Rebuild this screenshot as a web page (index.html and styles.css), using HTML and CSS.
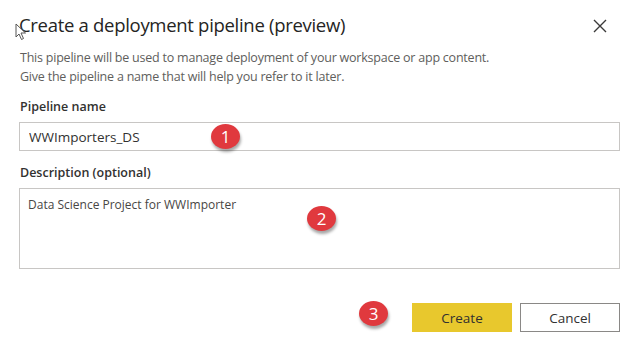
FILE: index.html
```html
<!DOCTYPE html>
<html lang="en">
<head>
    <meta charset="UTF-8">
    <title>Create a deployment pipeline</title>
    <link rel="stylesheet" href="styles.css">
</head>
<body>
    <div class="dialog">
        <div class="header">
            <h1>Create a deployment pipeline (preview)</h1>
            <button class="close" aria-label="Close">
                <svg width="14" height="14" viewBox="0 0 14 14"><path d="M1 1L13 13M13 1L1 13" stroke="#3b3a39" stroke-width="1.4" fill="none"/></svg>
            </button>
        </div>
        <p class="intro">This pipeline will be used to manage deployment of your workspace or app content.<br>Give the pipeline a name that will help you refer to it later.</p>

        <div class="field">
            <label for="name">Pipeline name</label>
            <div class="box">
                <input id="name" type="text" value="WWImporters_DS">
                <span class="badge b1">1</span>
            </div>
        </div>

        <div class="field">
            <label for="desc">Description (optional)</label>
            <div class="box">
                <textarea id="desc">Data Science Project for WWImporter</textarea>
                <span class="badge b2">2</span>
            </div>
        </div>

        <div class="actions">
            <span class="badge b3">3</span>
            <button class="btn primary">Create</button>
            <button class="btn">Cancel</button>
        </div>

        <!-- mouse pointer captured in the screenshot -->
        <svg class="cursor" width="12" height="18" viewBox="0 0 12 18"><path d="M1 1L1 14L4 11L6.5 16.5L8.5 15.5L6 10L10.5 10Z" fill="#fff" stroke="#555" stroke-width="1"/></svg>
    </div>
</body>
</html>
```

FILE: styles.css
```css
body {
    margin: 0;
    background: #ffffff;
    font-family: "Open Sans", "Noto Sans", Arial, sans-serif;
    color: #252423;
}

.dialog {
    position: relative;
    width: 629px;
    height: 346px;
    padding: 12px 10px 0 19px;
    box-sizing: border-box;
}

.header {
    display: flex;
    justify-content: space-between;
    align-items: center;
}

h1 {
    margin: 0;
    font-size: 18.5px;
    font-weight: 400;
    line-height: 26px;
    letter-spacing: -0.3px;
}

.close {
    background: none;
    border: none;
    padding: 0;
    margin: 2px 12px 0 0;
    width: 14px;
    height: 14px;
}

.intro {
    margin: 10px 0 0 1px;
    font-size: 12.5px;
    line-height: 19px;
    color: #605e5c;
    letter-spacing: -0.22px;
}

.field {
    margin-top: 12px;
    width: 601px;
}

.field + .field {
    margin-top: 13px;
}

label {
    display: block;
    font-size: 12.5px;
    font-weight: 600;
    line-height: 18px;
    margin: 0 0 6px 1px;
    color: #323130;
}

.box {
    position: relative;
}

input, textarea {
    display: block;
    width: 100%;
    box-sizing: border-box;
    border: 1px solid #c8c6c4;
    font-family: inherit;
    color: #323130;
    outline: none;
    margin: 0;
}

input {
    height: 29px;
    padding: 0 9px;
    font-size: 13.5px;
}

textarea {
    height: 81px;
    padding: 7px 8px;
    font-size: 12px;
    resize: none;
    color: #484644;
}

.badge {
    position: absolute;
    width: 29px;
    height: 25px;
    border-radius: 50%;
    background: #e0393e;
    color: #ffffff;
    font-size: 17px;
    line-height: 25px;
    text-align: center;
    box-shadow: 1px 3px 3px rgba(0, 0, 0, 0.35);
}

.b1 { left: 192px; top: 2px; }
.b2 { left: 288px; top: 18px; }

.actions {
    display: flex;
    justify-content: flex-end;
    align-items: center;
    gap: 8px;
    width: 601px;
    margin-top: 34px;
}

.b3 {
    position: static;
    margin: -8px 16px 0 0;
}

.btn {
    width: 100px;
    height: 29px;
    border: 1px solid #8a8886;
    background: #ffffff;
    font-family: inherit;
    font-size: 13.5px;
    color: #323130;
    padding: 0;
}

.btn.primary {
    background: #e8c82d;
    border-color: #e8c82d;
}

.cursor {
    position: absolute;
    left: 15px;
    top: 23px;
}
```
